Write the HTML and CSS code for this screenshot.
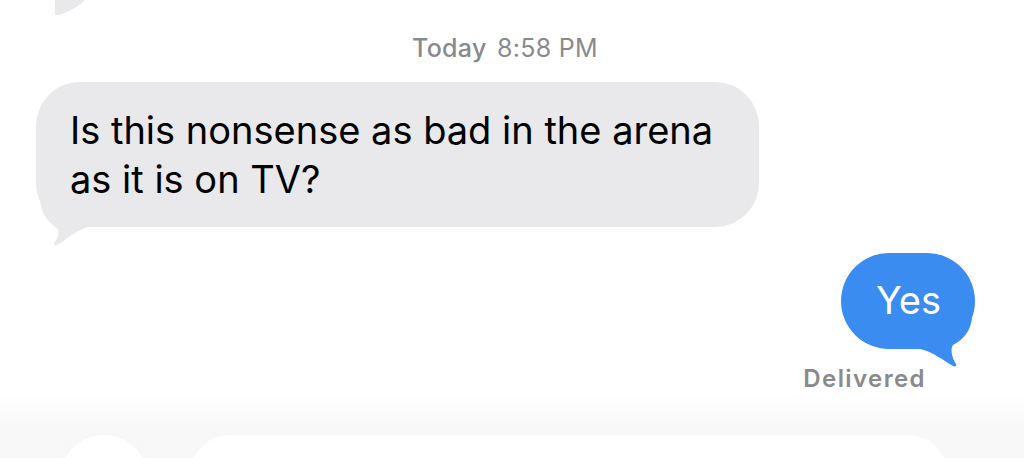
FILE: index.html
```html
<!DOCTYPE html>
<html lang="en">
<head>
    <meta charset="UTF-8">
    <meta name="viewport" content="width=device-width, initial-scale=1.0">
    <title>Messages</title>
    <link rel="stylesheet" href="styles.css">
</head>
<body>
    <div class="thread">
        <!-- tail of the message above, cut off by the top edge -->
        <svg class="prev-tail" width="60" height="20" viewBox="0 0 60 20">
            <path d="M0 0 L 30 0 C 24 6, 14 12, 4 15 C 0 16, -2 14, 0 10 Z" fill="#e9e9eb"/>
        </svg>

        <div class="stamp"><b>Today</b> 8:58 PM</div>

        <div class="row row-in">
            <div class="bubble bubble-in">
                Is this nonsense as bad in the arena<br>as it is on TV?
                <svg class="tail tail-in" width="60" height="52" viewBox="0 0 60 52">
                    <path d="M4 0 C 4 18, 12 27, 21 33 C 24 37, 22 44, 18 48 C 17 50, 19 51, 21 50 C 30 45, 38 36, 52 32 L 52 0 Z" fill="#e9e9eb"/>
                </svg>
            </div>
        </div>

        <div class="row row-out">
            <div class="bubble bubble-out">
                Yes
                <svg class="tail tail-out" width="60" height="52" viewBox="0 0 60 52">
                    <path d="M57 0 C 56 15, 47 23, 38 28 C 35 32, 37 41, 41 47 C 42 49, 40 50, 38 49 C 28 43, 18 35, 5 32 L 5 0 Z" fill="#3a8cf0"/>
                </svg>
            </div>
        </div>
        <div class="status">Delivered</div>
    </div>

    <div class="composer">
        <div class="round-btn"></div>
        <div class="input-pill"></div>
    </div>
</body>
</html>
```

FILE: styles.css
```css
body {
    margin: 0;
    background-color: #fff;
    font-family: Inter, "Noto Sans", sans-serif;
    height: 458px;
    overflow: hidden;
    position: relative;
}

.thread {
    display: flex;
    flex-direction: column;
    padding-top: 32px;
    position: relative;
    z-index: 1;
}

.prev-tail {
    position: absolute;
    top: 0;
    left: 55px;
}

.stamp {
    text-align: center;
    color: #8a8a8e;
    font-size: 25px;
    line-height: 32px;
    letter-spacing: 0.3px;
    margin-left: -14px;
}

.stamp b {
    font-weight: 500;
    margin-right: 3px;
}

.row {
    display: flex;
}

.row-in {
    padding-left: 36px;
    margin-top: 18px;
}

.row-out {
    justify-content: flex-end;
    padding-right: 49px;
    margin-top: 26px;
}

.bubble {
    position: relative;
    font-size: 38px;
    line-height: 49px;
    border-radius: 44px;
}

.bubble-in {
    background-color: #e9e9eb;
    color: #000;
    padding: 24px 46px 23px 34px;
}

.bubble-out {
    background-color: #3a8cf0;
    color: #fff;
    padding: 23px 34px 24px 35px;
    border-radius: 48px;
}

.tail {
    position: absolute;
    bottom: -20px;
    z-index: -1;
}

.tail-in {
    left: 0;
}

.tail-out {
    right: 0;
}

.status {
    align-self: flex-end;
    margin-right: 98px;
    margin-top: 15px;
    color: #8a8a8e;
    font-size: 24px;
    font-weight: 600;
    letter-spacing: 1.4px;
}

.composer {
    position: absolute;
    left: 0;
    right: 0;
    bottom: 0;
    height: 23px;
    overflow: hidden;
    background: linear-gradient(#fff, #f8f8f8 50%, #f8f8f8);
    display: flex;
    align-items: flex-start;
    padding: 40px 76px 0 60px;
    gap: 42px;
}

.round-btn {
    width: 88px;
    height: 88px;
    border-radius: 50%;
    background-color: #fff;
    flex: none;
    box-shadow: 0 0 14px 6px #f7f7f7;
}

.input-pill {
    flex: 1;
    height: 80px;
    border-radius: 40px;
    background-color: #fff;
    box-shadow: 0 0 14px 6px #f7f7f7;
}
```
